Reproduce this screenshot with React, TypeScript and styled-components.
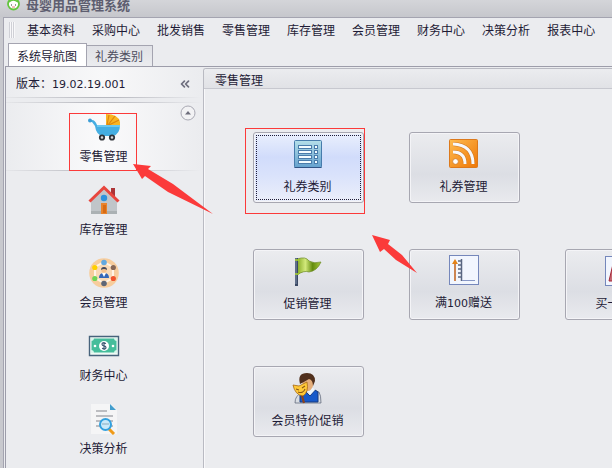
import React from 'react';
import styled, { createGlobalStyle, css } from 'styled-components';
import { ChevronsLeft } from 'lucide-react';

const GlobalStyle = createGlobalStyle`
  * { box-sizing: border-box; }
  html, body, #root { height: 100%; }
  body {
    margin: 0;
    overflow: hidden;
    color: #1e1b36;
    font: 12px/16px "Noto Sans CJK SC", sans-serif;
  }
  button { margin: 0; padding: 0; border: 0; background: none; font: inherit; color: inherit; white-space: nowrap; }
`;

const Shell = styled.div`
  position: relative;
  display: flex;
  flex-direction: column;
  height: 100%;
  overflow: hidden;
  padding-left: 3px;
  background: #c8c9ce;
`;

const TitleBar = styled.header`
  display: flex;
  align-items: center;
  gap: 6px;
  flex: none;
  height: 17px;
  margin-left: -3px;
  padding: 0 0 7px 7px;
  background: linear-gradient(#d4d5d9, #c6c7cc);
`;

const Title = styled.h1`
  margin: 0;
  font-size: 13px;
  line-height: 16px;
  font-weight: 700;
  color: #5e5e70;
`;

const Frame = styled.div`
  display: flex;
  flex-direction: column;
  flex: 1;
  min-height: 0;
  padding-left: 1px;
  border-top: 1px solid #a4a4b0;
  border-left: 1px solid #a4a4b0;
  background: #ebecef;
`;

const MenuBar = styled.nav`
  display: flex;
  align-items: center;
  gap: 17px;
  flex: none;
  height: 25px;
  padding: 0 0 2px 4px;
`;

const Grip = styled.span`
  width: 6px;
  height: 16px;
  margin-right: -5px;
  background: repeating-linear-gradient(90deg, #cfd0d6 0 1px, #f8f8fa 1px 2px);
`;

const Tabs = styled.div`
  display: flex;
  align-items: flex-end;
  flex: none;
  height: 23px;
  padding-left: 3px;
`;

const Tab = styled.button<{ $active?: boolean }>`
  height: 21px;
  padding: 0 9px 0 8px;
  border: 1px solid #a4a4b0;
  border-left-width: 0;
  border-bottom: 0;
  background: linear-gradient(#e0e1e6, #ebecef);
  color: #4e4e60;
  ${(p) =>
    p.$active &&
    css`
      height: 24px;
      margin-bottom: -1px;
      border-left-width: 1px;
      background: #fff;
      color: #1e1b36;
    `}
`;

const Workspace = styled.div`
  display: flex;
  flex: 1;
  min-height: 0;
  border-top: 1px solid #9d9daa;
  border-left: 1px solid #9d9daa;
`;

const Sidebar = styled.aside`
  position: relative;
  flex: none;
  width: 197px;
  padding-right: 2px;
`;

const rule = 'linear-gradient(90deg, #e5e6e9, #b8b9c0 45%, #b8b9c0 55%, #ebecef)';

const Version = styled.div`
  display: flex;
  align-items: center;
  justify-content: space-between;
  height: 31px;
  padding: 2px 9px 0 10px;
  background: ${rule} bottom / 100% 1px no-repeat, linear-gradient(90deg, #ebecef, #f8f8f9 50%, #ebecef);
`;

const Digits = styled.span`
  font-family: "DejaVu Sans", sans-serif;
  font-size: 11px;
`;

const CollapseButton = styled.button`
  display: flex;
  color: #70707f;
`;

const NavList = styled.div`
  display: flex;
  flex-direction: column;
  gap: 4px;
  margin-top: 4px;
`;

const NavItem = styled.button<{ $selected?: boolean }>`
  display: flex;
  flex-direction: column;
  align-items: center;
  justify-content: flex-end;
  gap: 5px;
  height: 69px;
  padding-bottom: 7px;
  ${(p) =>
    p.$selected &&
    css`
      background: ${rule} top / 100% 1px no-repeat, ${rule} bottom / 100% 1px no-repeat,
        linear-gradient(90deg, #ebecef, #fafafb 50%, #ebecef);
    `}
`;

const ScrollUp = styled.button`
  position: absolute;
  top: 38px;
  right: 7px;
  display: flex;
`;

const Panel = styled.main`
  flex: 1;
  min-width: 0;
  margin-top: 1px;
  overflow: hidden;
  border: 1px solid #b9bac2;
  border-width: 1px 0 0 1px;
  border-top-left-radius: 3px;
  box-shadow: inset 1px 1px #f8f8fa;
`;

const PanelTitle = styled.h2`
  margin: 0;
  height: 20px;
  padding: 3px 0 0 11px;
  border-bottom: 1px solid #c7c8cf;
  background: linear-gradient(#ebecef, #e1e2e6);
  font-size: 12px;
  line-height: 16px;
  font-weight: 400;
`;

const TileGrid = styled.div`
  display: grid;
  grid-template-columns: repeat(3, 111px);
  grid-auto-rows: 71px;
  gap: 46px 45px;
  padding: 43px 0 0 49px;
`;

const Tile = styled.button<{ $column?: number; $active?: boolean }>`
  display: flex;
  flex-direction: column;
  align-items: center;
  justify-content: center;
  gap: 8px;
  padding: 0 2px 4px 0;
  border: 1px solid #a7a7b1;
  border-radius: 3px;
  background: linear-gradient(#ebecef, #dcdee4 60%, #e9eaee);
  box-shadow: inset 0 0 0 1px #f4f4f7;
  grid-column: ${(p) => p.$column ?? 'auto'};
  ${(p) =>
    p.$active &&
    css`
      background: linear-gradient(#eaf0fd, #d1dcfb 35%, #d9e2fb 60%, #eceffa);
      outline: 1px dotted #1e1b36;
      outline-offset: -4px;
    `}
`;

const Annotations = styled.svg`
  position: absolute;
  top: 0;
  left: 0;
  pointer-events: none;
`;

const Icon = ({ children, size = 32 }: { children: React.ReactNode; size?: number }) => (
  <svg width={size} height={size} viewBox="0 0 32 32" aria-hidden="true">
    {children}
  </svg>
);

const Stroller = () => (
  <Icon>
    <path d="M18 15V3Q30 3 32 11v4z" fill="#f9b522" />
    <path d="M19 14 21 4M20 14l7-9M21 14l10-5" stroke="#df850c" strokeWidth="1.2" />
    <path d="M1 9h3q3 0 5 5h23q0 9-7 11H14q-6-2-7-10l-3-4H1z" fill="#45aee2" />
    <circle cx="2" cy="9.5" r="2" fill="#3c9ed6" />
    <path d="M9 14h23v2H9z" fill="#6cc8f0" />
    <circle cx="14" cy="26.5" r="2.2" fill="#d8dadd" stroke="#30343a" strokeWidth="1.8" />
    <circle cx="24" cy="26.5" r="2.2" fill="#d8dadd" stroke="#30343a" strokeWidth="1.8" />
  </Icon>
);

const House = () => (
  <Icon>
    <path d="M23 4h4v10h-4z" fill="#ac3437" />
    <path d="M3 17 16 4l13 13v13H3z" fill="#c0c5c9" />
    <path d="M3 27h26v3H3z" fill="#abb1b4" />
    <path d="m1.5 17.5 14.5-14 14.5 14" fill="none" stroke="#e8463e" strokeWidth="3" />
    <circle cx="16" cy="14" r="3.2" fill="#2c93dd" />
    <path d="M13 19h6v11h-6z" fill="#e9832b" />
    <path d="M15 21h3v8h-3z" fill="#d76b15" />
  </Icon>
);

const Members = () => (
  <Icon>
    <circle cx="16" cy="16" r="14.8" fill="#f7cd9d" />
    <path d="m16 5 9 5v11l-9 5-9-5V10z" fill="#f9d9b6" stroke="#fff4e5" strokeWidth="2" />
    <circle cx="16" cy="5.5" r="2.8" fill="#62a8df" />
    <circle cx="25.3" cy="10.5" r="2.6" fill="#866757" />
    <circle cx="25.3" cy="21.5" r="2.6" fill="#f1542d" />
    <circle cx="16" cy="26.5" r="2.8" fill="#5e6676" />
    <circle cx="6.8" cy="21.5" r="2.6" fill="#70d456" />
    <circle cx="6.8" cy="10.5" r="2.6" fill="#ffd000" />
    <path d="M11 21q0-5 5-5t5 5z" fill="#3467b8" />
    <path d="m14 16 2 4 2-4z" fill="#fff" />
    <circle cx="16" cy="13" r="2.7" fill="#f6c28e" />
    <path d="M13 13q0-3 3-3t3 3q-3-2-6 0" fill="#42485b" />
  </Icon>
);

const Banknote = () => (
  <Icon>
    <path d="M1.5 6.5h29v19h-29z" fill="#effaf5" stroke="#47637c" strokeWidth="1.4" />
    <path d="M3.5 8.5h25v14h-25z" fill="#45bd9b" />
    <path d="M3 8h3q0 3-3 3zM29 8h-3q0 3 3 3zM3 23h3q0-3-3-3zM29 23h-3q0-3 3-3z" fill="#d8f6eb" />
    <circle cx="16" cy="16" r="5" fill="#fff" />
    <path d="M18 13.5q-4-1.5-4 .7 0 1.3 2 1.6 2 .3 2 1.8 0 2-4 .8M16 12v8" fill="none" stroke="#405d75" strokeWidth="1.2" />
    <circle cx="7" cy="16" r="1.3" fill="#fff" />
    <circle cx="25" cy="16" r="1.3" fill="#fff" />
  </Icon>
);

const Report = () => (
  <Icon>
    <path d="M3 1h20l6 6v24H3z" fill="#f5f5f6" />
    <path d="M22 1v6h6z" fill="#429dcd" />
    <path d="M8 8h11M8 13h17M8 18h17M8 23h17" stroke="#a9abb0" strokeWidth="1.5" />
    <path d="m21 26 5 5" stroke="#ef9a19" strokeWidth="3" />
    <circle cx="17.5" cy="21.5" r="5.5" fill="#c8eafa" stroke="#32a1df" strokeWidth="2" />
    <path d="M14 21h7" stroke="#8cabbb" />
  </Icon>
);

const ListIcon = () => (
  <Icon>
    <defs>
      <linearGradient id="listFill" x2="0" y2="1">
        <stop stopColor="#b4dfe9" />
        <stop offset="1" stopColor="#65a1ce" />
      </linearGradient>
    </defs>
    <rect x="2.5" y="2.5" width="27" height="27" rx="1" fill="url(#listFill)" stroke="#477cac" />
    <path d="M2.5 29.5h27" stroke="#315486" />
    {[7, 12, 17, 22].map((y) => (
      <React.Fragment key={y}>
        <rect x="6.5" y={y + 0.5} width="13" height="3" fill="#f3fcff" stroke="#4a7cab" />
        <rect x="22.5" y={y + 0.5} width="3" height="3" fill="#f3fcff" stroke="#4a7cab" />
      </React.Fragment>
    ))}
  </Icon>
);

const Feed = () => (
  <Icon>
    <defs>
      <linearGradient id="feedFill" x2="1" y2="1">
        <stop stopColor="#ffbc50" />
        <stop offset="1" stopColor="#ee7707" />
      </linearGradient>
    </defs>
    <rect x="1.5" y="1.5" width="28" height="28" rx="1" fill="url(#feedFill)" stroke="#dc791c" />
    <path d="M5 14q12 0 12 12M5 6q20 1 20 20" fill="none" stroke="#d07822" strokeWidth="4" />
    <path d="M5 14q12 0 12 12M5 6q20 1 20 20" fill="none" stroke="#f7f8fa" strokeWidth="3" />
    <circle cx="7.5" cy="23.5" r="2.8" fill="#fff" stroke="#c57428" strokeWidth=".7" />
  </Icon>
);

const Flag = () => (
  <Icon>
    <defs>
      <linearGradient id="flagFill">
        <stop stopColor="#84a923" />
        <stop offset=".35" stopColor="#d2e97b" />
        <stop offset=".65" stopColor="#638b0e" />
        <stop offset="1" stopColor="#a8ca3d" />
      </linearGradient>
    </defs>
    <path d="M5 4q9-3 12 2 5 3 12 1-4 9-12 10-5-2-12 3z" fill="url(#flagFill)" stroke="#6c8b24" strokeWidth=".7" />
    <path d="M4.5 3v28" stroke="#3a4863" strokeWidth="3" />
    <path d="M4 3v26" stroke="#8394b0" />
    <path d="M3 5h4M3 19h4" stroke="#a9d32d" strokeWidth="1.5" />
  </Icon>
);

const Gauge = () => (
  <Icon>
    <rect x="1.5" y="1.5" width="29" height="29" fill="#f2f6fe" stroke="#7587bb" />
    <path d="M7 27V9" stroke="#bd570b" strokeWidth="1.4" />
    <path d="m4 10 3-5 3 5z" fill="#e48317" />
    <path d="M13.5 5v22M10 7h3M10 11h3M10 15h3M10 19h3M10 23h3" stroke="#596681" strokeWidth="1.5" />
    <path d="M14 26.5h13" stroke="#8797c5" />
  </Icon>
);

const Peak = () => (
  <Icon>
    <rect x="1.5" y="1.5" width="29" height="29" fill="#f2f6fe" stroke="#7587bb" />
    <path d="M5 26 9 9l7 12 8-10 4 15z" fill="#c66b75" stroke="#a32737" />
  </Icon>
);

const Actor = () => (
  <Icon>
    <path d="M3 31q0-8 7-10l9-4 8 3q2 3 2 11z" fill="#d9dde3" stroke="#555d70" strokeWidth=".7" />
    <path d="m8 22 5-3 5 5 5-6 3 2v10H8z" fill="#1659ca" stroke="#163b80" />
    <path d="m15 18 3 5 5-5-2-2h-5z" fill="#edf5fb" />
    <path d="M10 9q6-7 11 0v5q-2 5-5 5t-5-5z" fill="#e4ae7c" />
    <path d="M8 12Q5 1 15 1q8 0 8 8l-2 5q0-6-4-7-5 3-9 5" fill="#51301d" />
    <path d="m1 13 6 1 8-4q2 10-4 14-8-1-10-11z" fill="#ffc938" stroke="#a76817" strokeWidth=".8" />
    <path d="m4 17 3 1m3-2 3-2m-7 6q5 2 7-3" stroke="#8c5914" fill="none" strokeWidth="1.1" />
    <path d="m10 24 2 7" stroke="#8c431c" strokeWidth="2.2" />
  </Icon>
);

const menus = ['基本资料', '采购中心', '批发销售', '零售管理', '库存管理', '会员管理', '财务中心', '决策分析', '报表中心'];

const navigation = [
  { label: '零售管理', icon: <Stroller /> },
  { label: '库存管理', icon: <House /> },
  { label: '会员管理', icon: <Members /> },
  { label: '财务中心', icon: <Banknote /> },
  { label: '决策分析', icon: <Report /> },
];

export default function App() {
  return (
    <Shell>
      <GlobalStyle />
      <TitleBar>
        <svg width="13" height="16" viewBox="0 0 13 16" aria-hidden="true">
          <circle cx="6.5" cy="7" r="5.5" fill="#fff" stroke="#64c53f" strokeWidth="1.8" />
          <path d="M2 5q4-4 9 0" stroke="#64c53f" strokeWidth="1.5" fill="none" />
          <path d="M4 8h1M8 8h1" stroke="#333" />
          <path d="M5 10h3" stroke="#e87979" />
        </svg>
        <Title>母婴用品管理系统</Title>
      </TitleBar>
      <Frame>
        <MenuBar>
          <Grip />
          {menus.map((label) => (
            <button key={label}>{label}</button>
          ))}
        </MenuBar>
        <Tabs>
          <Tab $active>系统导航图</Tab>
          <Tab>礼券类别</Tab>
        </Tabs>
        <Workspace>
          <Sidebar>
            <Version>
              <span>
                版本：<Digits>19.02.19.001</Digits>
              </span>
              <CollapseButton aria-label="收起">
                <ChevronsLeft size={14} strokeWidth={3} />
              </CollapseButton>
            </Version>
            <NavList>
              {navigation.map((item, index) => (
                <NavItem key={item.label} $selected={index === 0}>
                  {item.icon}
                  {item.label}
                </NavItem>
              ))}
            </NavList>
            <ScrollUp aria-label="向上">
              <svg width="16" height="16" viewBox="0 0 16 16">
                <circle cx="8" cy="8" r="7" fill="#f2f2f4" stroke="#a9a9b3" />
                <path d="m5 9.5 3-3.5 3 3.5z" fill="#6d6d7b" />
              </svg>
            </ScrollUp>
          </Sidebar>
          <Panel>
            <PanelTitle>零售管理</PanelTitle>
            <TileGrid>
              <Tile $active>
                <ListIcon />
                礼券类别
              </Tile>
              <Tile>
                <Feed />
                礼券管理
              </Tile>
              <Tile $column={1}>
                <Flag />
                促销管理
              </Tile>
              <Tile>
                <Gauge />
                <span>
                  满<Digits>100</Digits>赠送
                </span>
              </Tile>
              <Tile>
                <Peak />
                买一送一
              </Tile>
              <Tile>
                <Actor />
                会员特价促销
              </Tile>
            </TileGrid>
          </Panel>
        </Workspace>
      </Frame>
      <Annotations width="420" height="280" viewBox="0 0 420 280" aria-hidden="true">
        <g fill="none" stroke="#fb3a3a">
          <rect x="69.5" y="113.5" width="67" height="57" />
          <rect x="245.5" y="128.5" width="119" height="85" />
        </g>
        <path
          d="M133 164 151 166 148 169 173 184 213 214 168 192 145 176 142 179zM372 235 390 240 388 244 402 255 417 273 396 260 384 249 380 252z"
          fill="#fb3a3a"
        />
      </Annotations>
    </Shell>
  );
}
